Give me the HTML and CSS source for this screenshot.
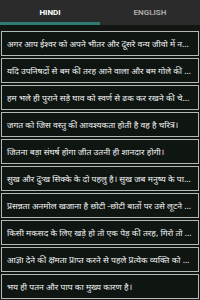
FILE: index.html
```html
<!DOCTYPE html>
<html>
<head>
<meta charset="utf-8">
<link rel="stylesheet" href="styles.css">
</head>
<body>
<div class="tabs">
  <div class="tab active">HINDI</div>
  <div class="tab">ENGLISH</div>
</div>
<div class="indicator-row"><div class="indicator"></div></div>
<div class="list">
  <div class="card">अगर आप ईश्वर को अपने भीतर और दूसरे वन्य जीवो में नहीं देख सकते</div>
  <div class="card">यदि उपनिषदों से बम की तरह आने वाला और बम गोले की तरह</div>
  <div class="card">हम भले ही पुराने सड़े घाव को स्वर्ण से ढक कर रखने की चेष्टा करें</div>
  <div class="card">जगत को जिस वस्तु की आवश्यकता होती है वह है चरित्र।</div>
  <div class="card">जितना बड़ा संघर्ष होगा जीत उतनी ही शानदार होगी।</div>
  <div class="card">सुख और दुःख सिक्के के दो पहलु है। सुख जब मनुष्य के पास आता है</div>
  <div class="card">प्रसन्नता अनमोल खजाना है छोटी -छोटी बातों पर उसे लूटने न दें</div>
  <div class="card">किसी मकसद के लिए खड़े हो तो एक पेड़ की तरह, गिरो तो बीज की तरह</div>
  <div class="card">आज्ञा देने की क्षमता प्राप्त करने से पहले प्रत्येक व्यक्ति को आज्ञा का पालन करना सीखना चाहिए</div>
  <div class="card">भय ही पतन और पाप का मुख्य कारण है।</div>
</div>
</body>
</html>
```

FILE: styles.css
```css
html, body {
  margin: 0;
  padding: 0;
  background: #1b1d1c;
  width: 200px;
  height: 300px;
  overflow: hidden;
  font-family: "Noto Sans", "Noto Sans Devanagari", "Lohit Devanagari", sans-serif;
}
.tabs {
  display: flex;
  height: 22px;
  background: #2b2b2b;
}
.tab {
  flex: 1;
  display: flex;
  align-items: center;
  justify-content: center;
  font-family: "Roboto", "Liberation Sans", sans-serif;
  font-weight: bold;
  font-size: 8px;
  color: #a8a8a8;
  padding-top: 3px;
}
.tab.active {
  color: #ffffff;
}
.indicator-row {
  height: 3px;
  background: #2b2b2b;
}
.indicator {
  width: 100px;
  height: 3px;
  background: #2f7b73;
}
.list {
  padding: 6px 1px 0 1px;
  background: #111613;
  display: flex;
  flex-direction: column;
  gap: 2px;
}
.card {
  height: 23px;
  border: 1px solid #b5b8b6;
  background: #0f1612;
  color: #f2f2f2;
  font-size: 8.6px;
  line-height: 24px;
  padding: 0 4px 0 5px;
  white-space: nowrap;
  overflow: hidden;
  text-overflow: ellipsis;
}
```
